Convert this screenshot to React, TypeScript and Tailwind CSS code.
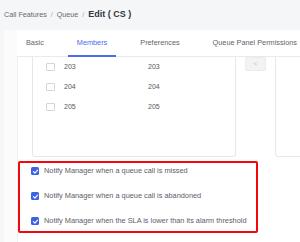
import React from "react";

const tabs = ["Basic", "Members", "Preferences", "Queue Panel Permissions"];
const members = ["203", "204", "205"];
const notices = [
  "Notify Manager when a queue call is missed",
  "Notify Manager when a queue call is abandoned",
  "Notify Manager when the SLA is lower than its alarm threshold",
];

function Checked() {
  return (
    <span className="flex h-[8px] w-[8px] shrink-0 items-center justify-center rounded-[1.5px] bg-[#3d63e4]">
      <svg viewBox="0 0 10 10" className="h-[7px] w-[7px]">
        <polyline points="2,5.2 4.2,7.2 8,3" fill="none" stroke="#fff" strokeWidth="1.6" strokeLinecap="round" strokeLinejoin="round" />
      </svg>
    </span>
  );
}

export default function App() {
  return (
    <div className="h-[242px] w-[300px] overflow-hidden bg-[#f5f6f8] font-['Liberation_Sans',Arial,sans-serif]">
      {/* Breadcrumb */}
      <div className="flex h-[30px] items-center pl-[4px] text-[7.2px] text-[#666a70]">
        <span>Call Features</span>
        <span className="mx-[4px] text-[#a8abb0]">/</span>
        <span>Queue</span>
        <span className="mx-[4px] text-[#a8abb0]">/</span>
        <span className="text-[9px] font-bold text-[#33363b]">Edit ( CS )</span>
      </div>

      {/* Card */}
      <div className="ml-[4px] flex h-[212px] bg-white">
        <div className="w-[13px] shrink-0 bg-[#fbfbfc]" />
        <div className="flex min-w-0 flex-1 flex-col">
          {/* Tabs */}
          <div className="flex h-[27px] shrink-0 border-b border-[#e9eaee] text-[7.3px] text-[#5f6369]">
            {tabs.map((t, i) => (
              <div
                key={t}
                className={`relative flex h-full shrink-0 items-center px-[9px] whitespace-nowrap ${i > 0 ? "ml-[15px]" : ""} ${t === "Members" ? "text-[#4d6cf0]" : ""}`}
              >
                {t}
                {t === "Members" && <span className="absolute right-0 bottom-[-1px] left-0 h-[2px] bg-[#4d6cf0]" />}
              </div>
            ))}
          </div>

          {/* Content */}
          <div className="flex flex-1 flex-col border-l border-[#f0f1f3]">
            {/* Transfer lists */}
            <div className="flex h-[100px] shrink-0 pl-[14px]">
              <div className="w-[204px] shrink-0 rounded-b-[3px] border-r border-b border-l border-[#e6e7ea]">
                {members.map((m) => (
                  <div key={m} className="flex h-[20px] items-center pl-[13px] text-[7px] text-[#55595f]">
                    <span className="h-[8.5px] w-[8.5px] shrink-0 rounded-[1px] border border-[#d4d6da] bg-white" />
                    <span className="ml-[9.5px] w-[84px] shrink-0">{m}</span>
                    <span>{m}</span>
                  </div>
                ))}
              </div>
              <div className="ml-[9px] flex h-[14px] w-[21px] shrink-0 items-center justify-center rounded-[2px] border border-[#ececee] bg-[#f3f3f4] text-[7px] text-[#c4c6ca]">
                &lt;
              </div>
              <div className="ml-[9px] flex-1 rounded-bl-[3px] border-b border-l border-[#e6e7ea]" />
            </div>

            {/* Notifications */}
            <div className="mt-[4px] flex w-[240px] flex-col gap-[13px] rounded-[2px] border-2 border-[#f2070d] pt-[2px] pb-[4px] pl-[11px]">
              {notices.map((n) => (
                <div key={n} className="flex h-[12px] items-center whitespace-nowrap text-[7.35px] text-[#5c6068]">
                  <Checked />
                  <span className="ml-[5px]">{n}</span>
                </div>
              ))}
            </div>
          </div>
        </div>
      </div>
    </div>
  );
}
